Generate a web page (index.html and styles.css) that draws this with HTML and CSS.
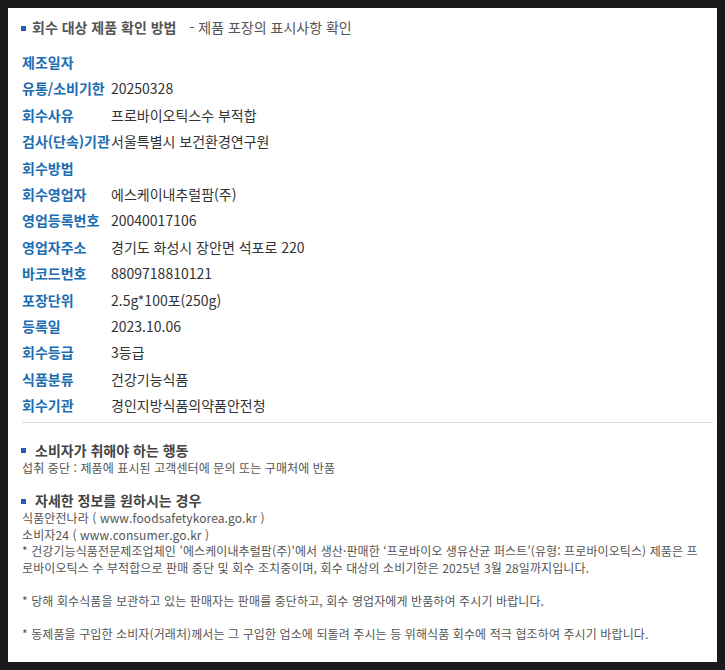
FILE: index.html
```html
<!DOCTYPE html>
<html lang="ko">
<head>
    <meta charset="UTF-8">
    <meta name="viewport" content="width=device-width, initial-scale=1.0">
    <title>회수 대상 제품 정보</title>
    <link rel="stylesheet" href="styles.css">
</head>
<body>

<div class="panel">
    <h2 class="title"><span class="bullet"></span><strong>회수 대상 제품 확인 방법</strong><span class="sub">- 제품 포장의 표시사항 확인</span></h2>

    <dl class="info">
        <dt>제조일자</dt><dd></dd>
        <dt>유통/소비기한</dt><dd>20250328</dd>
        <dt>회수사유</dt><dd>프로바이오틱스수 부적합</dd>
        <dt>검사(단속)기관</dt><dd>서울특별시 보건환경연구원</dd>
        <dt>회수방법</dt><dd></dd>
        <dt>회수영업자</dt><dd>에스케이내추럴팜(주)</dd>
        <dt>영업등록번호</dt><dd>20040017106</dd>
        <dt>영업자주소</dt><dd>경기도 화성시 장안면 석포로 220</dd>
        <dt>바코드번호</dt><dd>8809718810121</dd>
        <dt>포장단위</dt><dd>2.5g*100포(250g)</dd>
        <dt>등록일</dt><dd>2023.10.06</dd>
        <dt>회수등급</dt><dd>3등급</dd>
        <dt>식품분류</dt><dd>건강기능식품</dd>
        <dt>회수기관</dt><dd>경인지방식품의약품안전청</dd>
    </dl>

    <div class="section">
        <h3><span class="bullet"></span>소비자가 취해야 하는 행동</h3>
        <p>섭취 중단 : 제품에 표시된 고객센터에 문의 또는 구매처에 반품</p>
    </div>

    <div class="section">
        <h3><span class="bullet"></span>자세한 정보를 원하시는 경우</h3>
        <p>식품안전나라 ( www.foodsafetykorea.go.kr )<br>
        소비자24 ( www.consumer.go.kr )<br>
        * 건강기능식품전문제조업체인 '에스케이내추럴팜(주)'에서 생산·판매한 ‘프로바이오 생유산균 퍼스트’(유형: 프로바이오틱스) 제품은 프로바이오틱스 수 부적합으로 판매 중단 및 회수 조치중이며, 회수 대상의 소비기한은 2025년 3월 28일까지입니다.<br><br>
        * 당해 회수식품을 보관하고 있는 판매자는 판매를 중단하고, 회수 영업자에게 반품하여 주시기 바랍니다.<br><br>
        * 동제품을 구입한 소비자(거래처)께서는 그 구입한 업소에 되돌려 주시는 등 위해식품 회수에 적극 협조하여 주시기 바랍니다.</p>
    </div>
</div>

</body>
</html>
```

FILE: styles.css
```css
/* Basic styling */
body {
    font-family: "Noto Sans CJK KR", "Noto Sans", sans-serif;
    background-color: #1a1a1a;
    margin: 8px;
    color: #333;
}

.panel {
    background-color: #fff;
    height: 654px;
    box-sizing: border-box;
    padding: 9px 4px 0 13px;
}

.bullet {
    display: inline-block;
    width: 5px;
    height: 5px;
    background-color: #1f5fae;
    vertical-align: middle;
    margin-right: 6px;
    position: relative;
    top: -1px;
}

.title {
    margin: 0;
    font-size: 14px;
    line-height: 20px;
    font-weight: normal;
    color: #555;
}

.title strong {
    font-weight: bold;
}

.title .sub {
    margin-left: 13px;
}

.info {
    display: grid;
    grid-template-columns: 89px 1fr;
    margin: 12px 0 0 1px;
    font-size: 14px;
    line-height: 26.4px;
    border-bottom: 1px solid #ddd;
    padding-bottom: 3px;
}

.info dt {
    color: #1b6db3;
    font-weight: bold;
    white-space: nowrap;
}

.info dd {
    margin: 0;
    color: #333;
}

.section {
    margin-top: 19px;
}

.section + .section {
    margin-top: 16px;
}

.section h3 {
    margin: 0 0 1px;
    font-size: 14px;
    line-height: 17px;
    font-weight: bold;
    color: #444;
}

.section h3 .bullet {
    margin-right: 9px;
}

.section p {
    margin: 0;
    font-size: 12px;
    line-height: 16.6px;
    letter-spacing: 0.1px;
    color: #555;
    padding-left: 1px;
    padding-right: 6px;
}
```
